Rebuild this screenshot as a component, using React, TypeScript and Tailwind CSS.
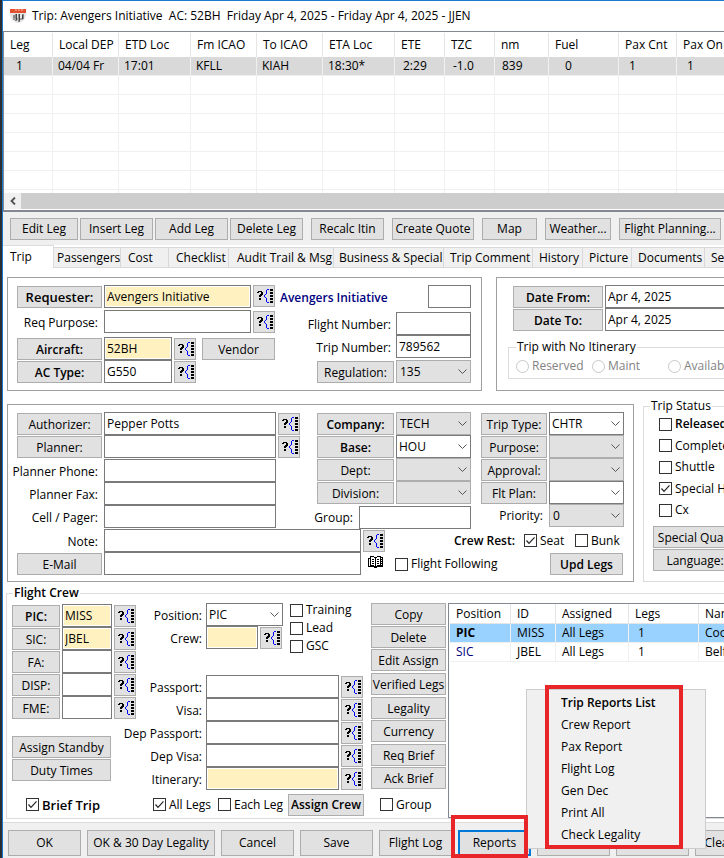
import { useState } from "react";
import type { ReactNode } from "react";
import clsx from "clsx";

function Btn({ children, className }: { children: ReactNode; className?: string }) {
    return (
        <button
            type="button"
            className={clsx(
                "h-[22px] shrink-0 border border-[#adadad] bg-[#e1e1e1] text-center leading-[19px] whitespace-nowrap hover:border-[#0078d7]",
                className,
            )}
        >
            {children}
        </button>
    );
}

function TextBox({ label, value, className, yellow }: { label: string; value?: string; className?: string; yellow?: boolean }) {
    return (
        <input
            type="text"
            aria-label={label}
            defaultValue={value}
            className={clsx(
                "h-[23px] shrink-0 border border-[#7a7a7a] px-[2px] outline-none",
                yellow ? "bg-[#fff2c0] shadow-[inset_0_0_0_1px_white]" : "bg-white",
                className,
            )}
        />
    );
}

function Combo({ label, value, className, gray }: { label: string; value?: string; className?: string; gray?: boolean }) {
    return (
        <span className={clsx("relative block h-[23px] shrink-0", className)}>
            <select
                aria-label={label}
                className={clsx(
                    "block h-full w-full appearance-none border outline-none",
                    gray ? "border-[#adadad] bg-[#e1e1e1] pl-[3px]" : "border-[#7a7a7a] bg-white pl-[2px]",
                )}
            >
                <option>{value}</option>
            </select>
            <svg viewBox="0 0 9 5" className="pointer-events-none absolute top-[9px] right-[4px] h-[5px] w-[9px]" fill="none" stroke="#555" strokeWidth="1">
                <path d="M.5 .5 4.5 4.5 8.5 .5" />
            </svg>
        </span>
    );
}

// opens the lookup list for the field next to it
function Lookup({ label }: { label: string }) {
    return (
        <button
            type="button"
            aria-label={label}
            className="flex h-[22px] w-[22px] shrink-0 items-center justify-center border border-[#adadad] bg-[#e1e1e1]"
        >
            <svg viewBox="0 0 17 14" className="h-[14px] w-[17px]" shapeRendering="crispEdges">
                <path d="M2 2h4v1h1v3h-1v1h-1v1h-2v-2h1v-1h1v-2h-2v1h-2v-1h1zM3 9h2v2h-2z" fill="#000" />
                <path d="M11 0h2v1h-2zM10 1h1v4h-1zM9 5h1v1h-1zM8 6h1v2h-1zM9 8h1v1h-1zM10 9h1v4h-1zM11 13h2v1h-2z" fill="#00f" />
                <path d="M14 0h3v2h-3zM14 3h3v2h-3zM14 6h3v2h-3zM14 9h3v2h-3zM14 12h3v2h-3z" fill="#000" />
            </svg>
        </button>
    );
}

function Check({ children, checked, className }: { children: ReactNode; checked?: boolean; className?: string }) {
    return (
        <label className={clsx("flex shrink-0 items-center gap-[3px] whitespace-nowrap", className)}>
            <span className="relative block size-[13px] shrink-0">
                <input type="checkbox" defaultChecked={checked} className="peer block size-[13px] appearance-none border border-[#333] bg-white" />
                <svg viewBox="0 0 13 13" className="pointer-events-none absolute inset-0 hidden size-[13px] peer-checked:block" fill="none" stroke="#222" strokeWidth="1.2">
                    <path d="M2.5 6.5 5 9.3 10.5 3.3" />
                </svg>
            </span>
            {children}
        </label>
    );
}

function Caption({ children, className }: { children: ReactNode; className?: string }) {
    return <span className={clsx("flex h-[23px] shrink-0 items-center justify-end whitespace-nowrap", className)}>{children}</span>;
}

const legColumns = [
    { name: "Leg", value: "1", col: "w-[49px]", pad: "pl-[12px]" },
    { name: "Local DEP", value: "04/04 Fr", col: "w-[66px]", pad: "pl-[5px]" },
    { name: "ETD Loc", value: "17:01", col: "w-[72px]", pad: "pl-[5px]" },
    { name: "Fm ICAO", value: "KFLL", col: "w-[66px]", pad: "pl-[5px]" },
    { name: "To ICAO", value: "KIAH", col: "w-[66px]", pad: "pl-[5px]" },
    { name: "ETA Loc", value: "18:30*", col: "w-[72px]", pad: "pl-[5px]" },
    { name: "ETE", value: "2:29", col: "w-[50px]", pad: "pl-[8px]" },
    { name: "TZC", value: "-1.0", col: "w-[50px]", pad: "pl-[8px]" },
    { name: "nm", value: "839", col: "w-[54px]", pad: "pl-[7px]" },
    { name: "Fuel", value: "0", col: "w-[70px]", pad: "pl-[16px]" },
    { name: "Pax Cnt", value: "1", col: "w-[58px]", pad: "pl-[10px]" },
    { name: "Pax On", value: "1", col: "", pad: "pl-[10px]" },
];

const legButtons = [
    { name: "Edit Leg", cls: "w-[68px]" },
    { name: "Insert Leg", cls: "w-[73px] ml-[2px]" },
    { name: "Add Leg", cls: "w-[73px] ml-[2px]" },
    { name: "Delete Leg", cls: "w-[73px] ml-[2px]" },
    { name: "Recalc Itin", cls: "w-[73px] ml-2" },
    { name: "Create Quote", cls: "w-[82px] ml-2" },
    { name: "Map", cls: "w-[55px] ml-2" },
    { name: "Weather...", cls: "w-[66px] ml-2" },
    { name: "Flight Planning...", cls: "w-[102px] ml-2" },
];

const tabs = [
    { name: "Passengers", cls: "w-[67px] pl-[3px]" },
    { name: "Cost", cls: "w-[48px] pl-[7px]" },
    { name: "Checklist", cls: "w-[60px] pl-[7px]" },
    { name: "Audit Trail & Msg", cls: "w-[105px] pl-2" },
    { name: "Business & Special", cls: "w-[110px] pl-[5px]" },
    { name: "Trip Comment", cls: "w-[89px] pl-1.5" },
    { name: "History", cls: "w-[50px] pl-1.5" },
    { name: "Picture", cls: "w-[49px] pl-1.5" },
    { name: "Documents", cls: "w-[73px] pl-1.5" },
    { name: "Services", cls: "w-[60px] pl-1.5" },
];

const crewSlots = [
    { name: "PIC:", value: "MISS", bold: true },
    { name: "SIC:", value: "JBEL" },
    { name: "FA:" },
    { name: "DISP:" },
    { name: "FME:" },
];

const crewRows = [
    { position: "PIC", id: "MISS", assigned: "All Legs", legs: "1", name: "Cooper", selected: true },
    { position: "SIC", id: "JBEL", assigned: "All Legs", legs: "1", name: "Belfort", selected: false },
];

const crewActions = [["Copy", "Delete", "Edit Assign"], ["Verified Legs"], ["Legality", "Currency"], ["Req Brief", "Ack Brief"]];

const reports = ["Trip Reports List", "Crew Report", "Pax Report", "Flight Log", "Gen Dec", "Print All", "Check Legality"];

function TitleBar() {
    return (
        <header className="flex h-[30px] items-center gap-1.5 pl-[7px]">
            <svg viewBox="0 0 16 15" className="h-[15px] w-[16px]">
                <path d="M0 0h16v4H0z" fill="#e2512f" />
                <path d="M5 1h2M8 1h2M11 1h2" stroke="#f7c4b4" strokeWidth="1" />
                <path d="M0 4h16v3l-2 4-4 3H6l-4-3-2-4z" fill="#e6e6e6" />
                <path d="M3 6h2v3H3zM5 5h2v7H5zM8 5h2v8H8zM12 5h2v5h-2z" fill="#8a8a8a" />
                <path d="M3 9h10v2H3z" fill="#a0a0a0" />
                <path d="M6 5h1v6H6zM9 5h1v7H9zM12 6h1v4h-1z" fill="#444" />
            </svg>
            <h1 className="whitespace-pre">Trip: Avengers Initiative  AC: 52BH  Friday Apr 4, 2025 - Friday Apr 4, 2025 - JJEN</h1>
        </header>
    );
}

function LegGrid() {
    return (
        <section className="border-t border-b-2 border-l border-[#828790] bg-white pt-px">
            <div className="h-[160px] overflow-hidden">
                <table className="w-full table-fixed border-separate border-spacing-0 text-left">
                    <thead>
                        <tr className="h-6">
                            {legColumns.map((c) => (
                                <th key={c.name} className={clsx("overflow-hidden border-r border-[#e5e5e5] p-0 pl-[6px] font-normal whitespace-nowrap last:border-r-0", c.col)}>
                                    {c.name}
                                </th>
                            ))}
                        </tr>
                    </thead>
                    <tbody>
                        <tr className="h-[19px] bg-[#d9d9d9]">
                            {legColumns.map((c) => (
                                <td key={c.name} className={clsx("border-r border-b border-[#f0f0f0] p-0 leading-[18px] last:border-r-0", c.pad)}>
                                    {c.value}
                                </td>
                            ))}
                        </tr>
                        {[1, 2, 3, 4, 5, 6, 7].map((n) => (
                            <tr key={n} className="h-[19px]">
                                {legColumns.map((c) => (
                                    <td key={c.name} className="border-r border-b border-[#f0f0f0] p-0 last:border-r-0"></td>
                                ))}
                            </tr>
                        ))}
                    </tbody>
                </table>
            </div>
            <div className="flex h-4 bg-[#cdcdcd]">
                <button type="button" aria-label="Scroll left" className="flex w-[17px] items-center justify-center bg-[#f0f0f0]">
                    <svg viewBox="0 0 6 8" className="h-2 w-1.5" fill="none" stroke="#505050" strokeWidth="1.8">
                        <path d="M5 .5 1.5 4 5 7.5" />
                    </svg>
                </button>
            </div>
            <div className="h-px"></div>
        </section>
    );
}

function TripPanel() {
    return (
        <section className="flex h-[114px] w-[475px] shrink-0 border border-[#a0a0a0] pt-[7px] pl-[9px]">
            <div className="flex w-[259px] shrink-0 flex-col">
                <div className="flex h-[25px] items-start gap-[2px]">
                    <Btn className="mt-px w-[85px] text-[13px] font-semibold">Requester:</Btn>
                    <TextBox label="Requester" value="Avengers Initiative" yellow className="w-[147px]" />
                    <Lookup label="Find requester" />
                </div>
                <div className="flex items-end gap-[2px]">
                    <Caption className="w-[85px] pt-[2px] pr-1">Req Purpose:</Caption>
                    <TextBox label="Req Purpose" className="w-[147px]" />
                    <Lookup label="Find purpose" />
                </div>
                <div className="mt-1 flex items-end gap-[2px]">
                    <Btn className="w-[85px] font-semibold">Aircraft:</Btn>
                    <TextBox label="Aircraft" value="52BH" yellow className="w-[68px]" />
                    <Lookup label="Find aircraft" />
                    <Btn className="ml-1 w-[73px]">Vendor</Btn>
                </div>
                <div className="flex items-end gap-[2px]">
                    <Btn className="w-[85px] font-semibold">AC Type:</Btn>
                    <TextBox label="AC Type" value="G550" className="w-[68px]" />
                    <Lookup label="Find aircraft type" />
                </div>
            </div>
            <div className="ml-1 flex w-[191px] shrink-0 flex-col">
                <div className="flex h-[27px] items-start justify-between">
                    <span className="leading-[25px] font-semibold whitespace-nowrap text-[#000080]">Avengers Initiative</span>
                    <TextBox label="Requester code" className="w-[43px]" />
                </div>
                <div className="flex justify-end gap-[5px]">
                    <Caption className="pt-[2px]">Flight Number:</Caption>
                    <TextBox label="Flight Number" className="w-[75px]" />
                </div>
                <div className="flex justify-end gap-[5px]">
                    <Caption className="pt-[2px]">Trip Number:</Caption>
                    <TextBox label="Trip Number" value="789562" className="w-[75px]" />
                </div>
                <div className="mt-[2px] flex items-end justify-end gap-[2px]">
                    <Btn className="w-[77px]">Regulation:</Btn>
                    <Combo label="Regulation" value="135" gray className="w-[75px]" />
                </div>
            </div>
        </section>
    );
}

function DatesPanel() {
    return (
        <section className="h-[114px] min-w-0 flex-1 overflow-hidden border border-r-0 border-[#a0a0a0] pt-[7px] pl-[11px]">
            <div className="flex items-end gap-[2px] pl-[5px]">
                <Btn className="w-[90px] font-semibold">Date From:</Btn>
                <TextBox label="Date From" value="Apr 4, 2025" className="w-[140px]" />
            </div>
            <div className="flex items-end gap-[2px] pl-[5px]">
                <Btn className="w-[90px] font-semibold">Date To:</Btn>
                <TextBox label="Date To" value="Apr 4, 2025" className="w-[140px]" />
            </div>
            <fieldset className="mt-2 h-10 w-[260px] border border-[#dcdcdc] pl-[7px]">
                <legend className="px-px leading-4">Trip with No Itinerary</legend>
                <div className="flex h-[22px] items-center text-[#838383]">
                    {["Reserved", "Maint", "Available"].map((name) => (
                        <label key={name} className="flex w-[76px] shrink-0 items-center gap-[3px]">
                            <input type="radio" name="noItinerary" disabled className="size-[13px] shrink-0 appearance-none rounded-full border border-[#c8c8c8] bg-white" />
                            {name}
                        </label>
                    ))}
                </div>
            </fieldset>
        </section>
    );
}

function ContactPanel() {
    return (
        <section className="h-[178px] w-[627px] shrink-0 border border-[#a0a0a0] pt-[7px] pl-[9px]">
            <div className="flex">
                <div className="w-[283px]">
                    <div className="flex items-end gap-[2px]">
                        <Btn className="w-[85px]">Authorizer:</Btn>
                        <TextBox label="Authorizer" value="Pepper Potts" className="w-[172px]" />
                        <Lookup label="Find authorizer" />
                    </div>
                    <div className="mb-px flex items-end gap-[2px]">
                        <Btn className="w-[85px]">Planner:</Btn>
                        <TextBox label="Planner" className="w-[172px]" />
                        <Lookup label="Find planner" />
                    </div>
                    {["Planner Phone", "Planner Fax", "Cell / Pager"].map((name) => (
                        <div key={name} className="flex gap-[2px]">
                            <Caption className="w-[85px] pt-[2px] pr-1">{name}:</Caption>
                            <TextBox label={name} className="w-[172px]" />
                        </div>
                    ))}
                </div>
                <div className="ml-[17px] w-[154px]">
                    <div className="flex items-end gap-[2px]">
                        <Btn className="w-[77px] font-semibold">Company:</Btn>
                        <Combo label="Company" value="TECH" gray className="w-[75px]" />
                    </div>
                    <div className="flex items-end gap-[2px]">
                        <Btn className="w-[77px] font-semibold">Base:</Btn>
                        <Combo label="Base" value="HOU" className="w-[75px]" />
                    </div>
                    <div className="flex items-end gap-[2px]">
                        <Btn className="w-[77px]">Dept:</Btn>
                        <Combo label="Dept" gray className="w-[75px]" />
                    </div>
                    <div className="flex items-end gap-[2px]">
                        <Btn className="w-[77px]">Division:</Btn>
                        <Combo label="Division" gray className="w-[75px]" />
                    </div>
                    <div className="mt-[2px] flex justify-end gap-[6px]">
                        <Caption>Group:</Caption>
                        <TextBox label="Group" className="w-[112px]" />
                    </div>
                </div>
                <div className="ml-[10px] w-[143px]">
                    <div className="flex items-end gap-[2px]">
                        <Btn className="w-[66px]">Trip Type:</Btn>
                        <Combo label="Trip Type" value="CHTR" className="w-[75px]" />
                    </div>
                    <div className="flex items-end gap-[2px]">
                        <Btn className="w-[66px]">Purpose:</Btn>
                        <Combo label="Purpose" gray className="w-[75px]" />
                    </div>
                    <div className="flex items-end gap-[2px]">
                        <Btn className="w-[66px]">Approval:</Btn>
                        <Combo label="Approval" gray className="w-[75px]" />
                    </div>
                    <div className="flex items-end gap-[2px]">
                        <Btn className="w-[66px]">Flt Plan:</Btn>
                        <Combo label="Flt Plan" className="w-[75px]" />
                    </div>
                    <div className="flex items-end justify-end gap-[6px]">
                        <Caption>Priority:</Caption>
                        <Combo label="Priority" value="0" gray className="w-[75px]" />
                    </div>
                </div>
            </div>
            <div className="flex items-end gap-[2px]">
                <Caption className="w-[85px] pt-[2px] pr-1">Note:</Caption>
                <TextBox label="Note" className="w-[257px]" />
                <Lookup label="Find note" />
                <Caption className="w-[128px] font-semibold">Crew Rest:</Caption>
                <Check checked className="ml-[7px] h-[23px] w-[49px]">Seat</Check>
                <Check className="h-[23px]">Bunk</Check>
            </div>
            <div className="flex items-end gap-[2px]">
                <Btn className="w-[85px]">E-Mail</Btn>
                <TextBox label="E-Mail" className="w-[257px]" />
                <button type="button" aria-label="Address book" className="flex h-[22px] w-[24px] items-start justify-center pt-[3px]">
                    <svg viewBox="0 0 15 12" className="h-[12px] w-[15px]" shapeRendering="crispEdges">
                        <path d="M2 0h4v1h3V0h4v1h2v10H9v1H6v-1H0V2h2z" fill="#000" />
                        <path d="M3 1h3v1h1v8H6V9H3zM9 1h3v8H9v1H8V2h1zM1 3h1v7h4v0.1H1z" fill="#fff" />
                        <path d="M4 3h2v1H4zM4 5h2v1H4zM4 7h2v1H4zM9 3h2v1H9zM9 5h2v1H9zM9 7h2v1H9z" fill="#000" />
                        <path d="M13 2h1v1h-1zM13 4h1v1h-1zM13 6h1v1h-1zM13 8h1v1h-1z" fill="#fff" />
                    </svg>
                </button>
                <Check className="ml-1.5 h-[22px] w-[153px]">Flight Following</Check>
                <Btn className="w-[73px] font-semibold">Upd Legs</Btn>
            </div>
        </section>
    );
}

function TripStatus() {
    return (
        <fieldset className="h-[184px] min-w-0 flex-1 overflow-hidden border border-r-0 border-[#dcdcdc] pl-[9px]">
            <legend className="-ml-[3px] px-px leading-4">Trip Status</legend>
            <div className="flex h-[106px] flex-col justify-between pl-1.5">
                <Check className="h-5 font-semibold">Released</Check>
                <Check className="h-5">Completed</Check>
                <Check className="h-5">Shuttle</Check>
                <Check checked className="h-5">Special Handling</Check>
                <Check className="h-5">Cx</Check>
            </div>
            <div className="mt-1.5 flex flex-col gap-px">
                <Btn className="w-[84px]">Special Quals</Btn>
                <Btn className="w-[84px]">Language:</Btn>
            </div>
        </fieldset>
    );
}

function FlightCrew() {
    return (
        <fieldset className="ml-[3px] flex h-[234px] border border-r-0 border-[#dcdcdc] pl-[5px]">
            <legend className="ml-px px-px leading-4 font-semibold">Flight Crew</legend>
            <div className="flex h-full">
                <div className="w-[434px] shrink-0">
                    <div className="flex h-[189px]">
                        <div className="w-[124px] pt-[3px]">
                            {crewSlots.map((s) => (
                                <div key={s.name} className="flex items-end gap-[2px]">
                                    <Btn className={clsx("w-[48px]", s.bold && "font-semibold")}>{s.name}</Btn>
                                    <TextBox label={s.name} value={s.value} yellow={!!s.value} className="w-[50px]" />
                                    <Lookup label="Find crew member" />
                                </div>
                            ))}
                            <div className="mt-[17px] flex flex-col gap-px">
                                <Btn className="w-[99px]">Assign Standby</Btn>
                                <Btn className="w-[99px]">Duty Times</Btn>
                            </div>
                        </div>
                        <div className="w-[227px]">
                            <div className="flex h-[74px]">
                                <div className="w-[147px] pt-[2px]">
                                    <div className="flex gap-1">
                                        <Caption className="w-[66px] pt-[2px]">Position:</Caption>
                                        <Combo label="Position" value="PIC" className="w-[77px]" />
                                    </div>
                                    <div className="flex items-end">
                                        <Caption className="mr-1 w-[66px] pt-[2px]">Crew:</Caption>
                                        <TextBox label="Crew" yellow className="mr-[2px] w-[52px]" />
                                        <Lookup label="Find crew" />
                                    </div>
                                </div>
                                <div className="ml-[7px]">
                                    <Check className="h-[18px]">Training</Check>
                                    <Check className="h-[18px]">Lead</Check>
                                    <Check className="h-[18px]">GSC</Check>
                                </div>
                            </div>
                            {["Passport", "Visa", "Dep Passport", "Dep Visa", "Itinerary"].map((name) => (
                                <div key={name} className="flex items-end">
                                    <Caption className="mr-1 w-[66px] pt-[2px]">{name}:</Caption>
                                    <TextBox label={name} yellow={name === "Itinerary"} className="mr-[2px] w-[133px]" />
                                    <Lookup label={"Find " + name} />
                                </div>
                            ))}
                        </div>
                        <div className="ml-2 flex flex-col gap-[2px] pt-[2px]">
                            {crewActions.map((group) => (
                                <div key={group[0]} className="flex flex-col gap-px">
                                    {group.map((name) => (
                                        <Btn key={name} className="w-[75px]">{name}</Btn>
                                    ))}
                                </div>
                            ))}
                        </div>
                    </div>
                    <div className="mt-[3px] flex h-[23px] items-center pl-[14px]">
                        <Check checked className="w-[127px] text-[13px] font-semibold">Brief Trip</Check>
                        <Check checked className="w-[65px]">All Legs</Check>
                        <Check className="w-[70px]">Each Leg</Check>
                        <Btn className="w-[76px] font-semibold">Assign Crew</Btn>
                        <Check className="ml-4">Group</Check>
                    </div>
                </div>
                <div className="mt-[2px] ml-[2px] h-[215px] min-w-0 flex-1 overflow-hidden border border-r-0 border-[#828790] bg-white pl-px">
                    <table className="w-full min-w-[290px] table-fixed border-separate border-spacing-0 text-left">
                        <thead>
                            <tr className="h-5">
                                <th className="w-[61px] border-r border-b border-[#e5e5e5] p-0 pl-[6px] font-normal">Position</th>
                                <th className="w-[45px] border-r border-b border-[#e5e5e5] p-0 pl-[6px] font-normal">ID</th>
                                <th className="w-[73px] border-r border-b border-[#e5e5e5] p-0 pl-[6px] font-normal">Assigned</th>
                                <th className="w-[70px] border-r border-b border-[#e5e5e5] p-0 pl-[6px] font-normal">Legs</th>
                                <th className="border-b border-[#e5e5e5] p-0 pl-[6px] font-normal">Name</th>
                            </tr>
                        </thead>
                        <tbody>
                            {crewRows.map((r) => (
                                <tr key={r.id} className={clsx("h-[19px]", r.selected && "bg-[#99d1ff]")}>
                                    <td className={clsx("border-r border-b border-[#f0f0f0] p-0 pl-[6px] leading-[18px]", r.selected ? "font-bold" : "text-[#000080]")}>{r.position}</td>
                                    <td className="border-r border-b border-[#f0f0f0] p-0 pl-[6px] leading-[18px]">{r.id}</td>
                                    <td className="border-r border-b border-[#f0f0f0] p-0 pl-[6px] leading-[18px]">{r.assigned}</td>
                                    <td className="border-r border-b border-[#f0f0f0] p-0 pl-[9px] leading-[18px]">{r.legs}</td>
                                    <td className="border-b border-[#f0f0f0] p-0 pl-[6px] leading-[18px]">{r.name}</td>
                                </tr>
                            ))}
                        </tbody>
                    </table>
                </div>
            </div>
        </fieldset>
    );
}

function FooterButton({ children, className, label }: { children?: ReactNode; className?: string; label?: string }) {
    return (
        <button type="button" aria-label={label} className={clsx("h-[26px] shrink-0 border border-[#adadad] bg-[#e1e1e1] whitespace-nowrap", className)}>
            {children}
        </button>
    );
}

function Footer() {
    const [menuOpen, setMenuOpen] = useState<boolean>(true);

    return (
        <footer className="flex h-9 gap-1.5 border-t border-[#dcdcdc] bg-[#f0f0f0] pt-[7px] pl-[5px]">
            <FooterButton className="w-[73px]">OK</FooterButton>
            <FooterButton className="w-[128px]">OK & 30 Day Legality</FooterButton>
            <FooterButton className="w-[73px]">Cancel</FooterButton>
            <FooterButton className="w-[73px]">Save</FooterButton>
            <FooterButton className="w-[73px]">Flight Log</FooterButton>
            <div className="relative h-[26px] w-[73px] shrink-0">
                <button
                    type="button"
                    onClick={() => setMenuOpen(!menuOpen)}
                    className="h-full w-full border-2 border-[#0078d7] bg-[#e1e1e1]"
                >
                    Reports
                </button>
                {menuOpen && (
                    <div className="absolute bottom-[7px] left-[68px] z-10 w-[180px] border border-[#ccc] bg-[#f0f0f0] pt-[2px] pb-[2px]">
                        {reports.map((name, i) => (
                            <button key={name} type="button" className={clsx("block h-[22px] w-full pl-[34px] text-left hover:bg-[#90c8f6]", i === 0 && "font-semibold")}>
                                {name}
                            </button>
                        ))}
                        <div className="pointer-events-none absolute -top-[5px] -bottom-px left-[18px] w-[138px] border-4 border-[#e82629]"></div>
                    </div>
                )}
                <div className="pointer-events-none absolute -top-[15px] -left-[7px] z-20 h-[43px] w-[77px] border-4 border-[#e82629]"></div>
            </div>
            <FooterButton label="Print" className="w-[73px]" />
            <FooterButton label="Copy Trip" className="w-[73px]" />
            <FooterButton className="w-[73px]">Clear Trip</FooterButton>
        </footer>
    );
}

export default function App() {
    return (
        <div className="min-h-screen overflow-hidden border-l-2 border-[#2b2d33] font-['Open_Sans','Noto_Sans',sans-serif] text-[12px] leading-4 text-black">
            <div className="border-t border-l border-[#1979ca] bg-white">
                <TitleBar />
                <LegGrid />
                <div className="flex h-[33px] items-center bg-[#f0f0f0] pl-[7px]">
                    {legButtons.map((b) => (
                        <Btn key={b.name} className={b.cls}>{b.name}</Btn>
                    ))}
                </div>
                <nav className="flex h-[23px] items-end">
                    <button type="button" className="h-full w-[51px] shrink-0 border-t border-r border-[#dcdcdc] bg-white pl-[7px] text-left">Trip</button>
                    {tabs.map((t) => (
                        <button key={t.name} type="button" className={clsx("h-[21px] shrink-0 border-y border-r border-[#d9d9d9] bg-[#f0f0f0] text-left whitespace-nowrap", t.cls)}>
                            {t.name}
                        </button>
                    ))}
                </nav>
                <main>
                    <div className="mt-[9px] flex gap-[14px] pl-1">
                        <TripPanel />
                        <DatesPanel />
                    </div>
                    <div className="mt-[7px] flex items-end gap-[9px] pl-1">
                        <ContactPanel />
                        <TripStatus />
                    </div>
                    <div className="mt-[3px] mb-[3px]">
                        <FlightCrew />
                    </div>
                </main>
                <Footer />
            </div>
        </div>
    );
}
